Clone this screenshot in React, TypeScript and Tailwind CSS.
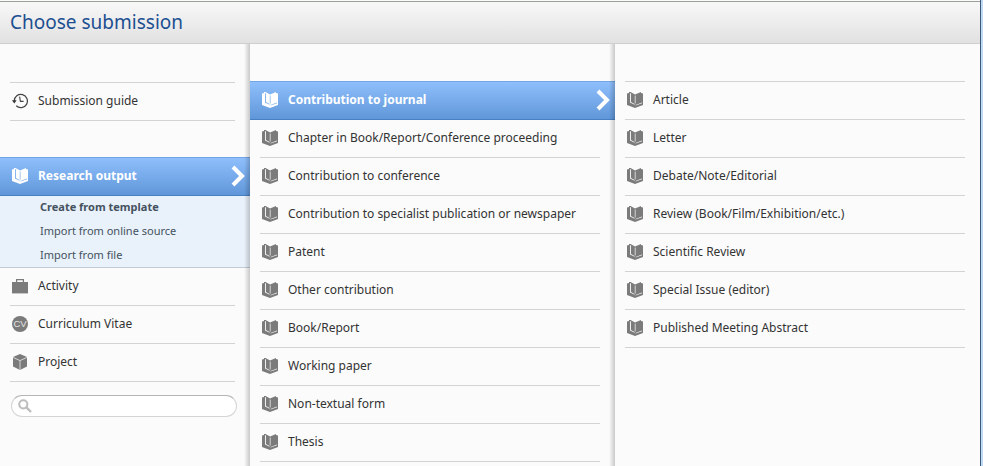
import React, { useState } from 'react';

// ─── Icons ───────────────────────────────────────────────────────────────────
function BookIcon() {
  return (
    <svg viewBox="0 0 16 16" className="size-4 shrink-0" fill="currentColor" fillRule="evenodd" aria-hidden="true">
      <path d="M0 1.5 2 1V0H3.6L8 2.4 14 0V1L16 1.5V13L8 16 0 13ZM3 1.2V10.6L7.6 12.8V11.9L3.9 10V1.2ZM7.8 3.4V11.4H8.5V3.4ZM8.5 13.6 15 11.2V10.6L8.5 13Z" />
    </svg>
  );
}

function HistoryIcon() {
  return (
    <svg viewBox="0 0 16 16" className="size-4 shrink-0" fill="none" stroke="#444" aria-hidden="true">
      <path d="M2.2 8A6.6 6.6 0 1 1 4.2 12.8" strokeWidth="1.2" />
      <path d="M7.6 3.6 8.4 8.4H11.6" strokeWidth="1.1" />
      <path d="M0 7.3H4.6L2.3 10.4Z" fill="#333" stroke="none" />
    </svg>
  );
}

function BriefcaseIcon() {
  return (
    <svg viewBox="0 0 16 16" className="size-4 shrink-0" fill="currentColor" aria-hidden="true">
      <path d="M0 4H16V15.4H0Z" />
      <path d="M4.6 4V1.6H11.4V4" fill="none" stroke="currentColor" strokeWidth="1.3" />
    </svg>
  );
}

function CvIcon() {
  return (
    <svg viewBox="0 0 16 16" className="size-4 shrink-0" fill="none" aria-hidden="true">
      <circle cx="8" cy="8" r="8" fill="currentColor" />
      <text x="8" y="11.4" textAnchor="middle" fontSize="9.5" fill="#e4e4e4" fontFamily="Liberation Sans, sans-serif">
        CV
      </text>
    </svg>
  );
}

function CubeIcon() {
  return (
    <svg viewBox="0 0 16 16" className="size-4 shrink-0" aria-hidden="true">
      <path d="M8 0 15 3V12.6L8 16 1 12.6V3Z" fill="currentColor" />
      <path d="M1 3.4 8 6.6 15 3.4M8 6.6V16" fill="none" stroke="#d4d4d4" strokeWidth="1" />
    </svg>
  );
}

function SearchIcon() {
  return (
    <svg viewBox="0 0 14 14" className="size-3.5" fill="none" stroke="#bdbdbd" aria-hidden="true">
      <circle cx="5.3" cy="5.3" r="4.1" strokeWidth="2" />
      <path d="M8.4 8.4 13 13" strokeWidth="2.4" />
    </svg>
  );
}

function ChevronIcon() {
  return (
    <svg viewBox="0 0 14 22" className="w-3.5 h-[22px] ml-auto shrink-0" fill="none" stroke="#fff" strokeWidth="4" aria-hidden="true">
      <path d="M2 2 11 11 2 20" />
    </svg>
  );
}

// ─── Menu row ────────────────────────────────────────────────────────────────
interface MenuItemProps {
  label:    string;
  icon?:    React.ReactNode;
  active?:  boolean;
  topLine?: boolean;
  onClick?: () => void;
}

function MenuItem({ label, icon = <BookIcon />, active = false, topLine = false, onClick }: MenuItemProps) {
  return (
    <li
      className={[
        active
          ? 'border-t border-b border-t-[#72a5e3] border-b-[#4781c5] bg-linear-to-b from-[#8fbffc] to-[#6097d9] text-white font-bold'
          : 'ml-[10px] mr-[15px] border-b border-[#d3d3d3] text-[#333]',
        topLine ? 'border-t' : '',
      ].join(' ')}
    >
      <button
        type="button"
        onClick={onClick}
        aria-current={active}
        className={[
          'w-full h-[37px] pb-0.5 flex items-center gap-2.5 text-left whitespace-nowrap cursor-pointer',
          active ? 'pl-3 pr-[5px]' : 'pl-0.5',
        ].join(' ')}
      >
        <span className={active ? 'text-white' : 'text-[#7b7b7b]'}>{icon}</span>
        <span>{label}</span>
        {active && <ChevronIcon />}
      </button>
    </li>
  );
}

const COLUMN_EDGE =
  'relative after:absolute after:inset-y-0 after:right-0 after:w-[6px] after:bg-linear-to-r after:from-black/0 after:to-black/20 after:pointer-events-none';

const TEMPLATE_OPTIONS = ['Create from template', 'Import from online source', 'Import from file'];

const OUTPUT_TYPES = [
  'Contribution to journal',
  'Chapter in Book/Report/Conference proceeding',
  'Contribution to conference',
  'Contribution to specialist publication or newspaper',
  'Patent',
  'Other contribution',
  'Book/Report',
  'Working paper',
  'Non-textual form',
  'Thesis',
];

const JOURNAL_TYPES = [
  'Article',
  'Letter',
  'Debate/Note/Editorial',
  'Review (Book/Film/Exhibition/etc.)',
  'Scientific Review',
  'Special Issue (editor)',
  'Published Meeting Abstract',
];

// ─── Page ────────────────────────────────────────────────────────────────────
export default function App() {
  const [option, setOption] = useState<string>(TEMPLATE_OPTIONS[0]);
  const [search, setSearch] = useState<string>('');

  return (
    <div className="min-h-screen flex bg-[#fbfbfb] text-[12px] font-['Noto_Sans','Open_Sans',sans-serif]">
      <div className="flex-1 min-w-0 flex flex-col">
        <header className="mt-px h-[43px] pb-0.5 flex items-center px-2.5 border-t border-b border-t-[#9a9f9a] border-b-[#cfcfcf] bg-linear-to-b from-[#f8f8f8] to-[#e1e1e1]">
          <h1 className="text-[19px] leading-6 text-[#1c4f91]">Choose submission</h1>
        </header>

        <main className="flex-1 flex">
          <nav className={`${COLUMN_EDGE} w-[250px] shrink-0 pt-[38px]`} aria-label="Submission type">
            <ul>
              <MenuItem label="Submission guide" icon={<HistoryIcon />} topLine />
            </ul>

            <ul className="mt-9">
              <MenuItem label="Research output" active />
              <li className="h-[72px] border-b border-[#c3cbd3] bg-[#e9f1fa]">
                <ul>
                  {TEMPLATE_OPTIONS.map((name) => (
                    <li key={name}>
                      <button
                        type="button"
                        onClick={() => setOption(name)}
                        className={[
                          'w-full h-6 pl-10 pb-0.5 flex items-center text-left text-[11px] text-[#445260] cursor-pointer',
                          name === option ? 'font-bold' : '',
                        ].join(' ')}
                      >
                        {name}
                      </button>
                    </li>
                  ))}
                </ul>
              </li>
              <MenuItem label="Activity" icon={<BriefcaseIcon />} />
              <MenuItem label="Curriculum Vitae" icon={<CvIcon />} />
              <MenuItem label="Project" icon={<CubeIcon />} />
            </ul>

            <label className="mt-[13px] ml-[11px] mr-[13px] h-[22px] flex items-center gap-2 pl-1.5 pr-3 rounded-full bg-white border border-[#d5d5d5] border-t-[#b5b5b5]">
              <SearchIcon />
              <input
                type="text"
                value={search}
                onChange={(e: React.ChangeEvent<HTMLInputElement>) => setSearch(e.target.value)}
                aria-label="Search"
                className="flex-1 min-w-0 bg-transparent outline-none"
              />
            </label>
          </nav>

          <section className={`${COLUMN_EDGE} flex-1 min-w-0 pt-[37px]`} aria-label="Research output">
            <ul>
              {OUTPUT_TYPES.map((name, i) => (
                <MenuItem key={name} label={name} active={i === 0} />
              ))}
            </ul>
          </section>

          <section className="flex-1 min-w-0 pt-[37px]" aria-label="Contribution to journal">
            <ul>
              {JOURNAL_TYPES.map((name, i) => (
                <MenuItem key={name} label={name} topLine={i === 0} />
              ))}
            </ul>
          </section>
        </main>
      </div>

      <div className="w-[3px] shrink-0 border-l border-[#3d5878] bg-[#bfdaf3]" />
    </div>
  );
}
